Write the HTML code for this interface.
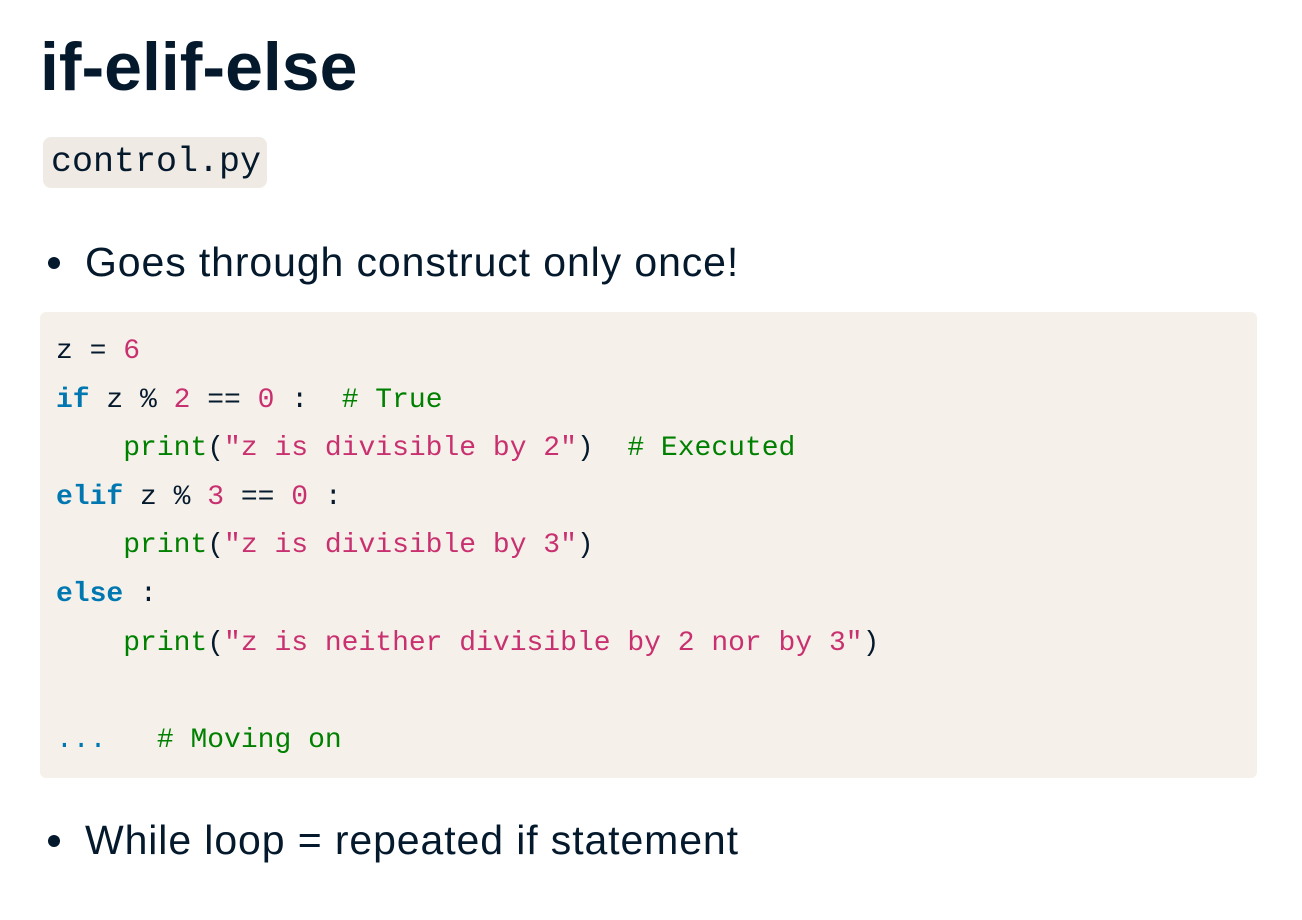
<!DOCTYPE html>
<html><head><meta charset="utf-8"><style>
body{margin:0;background:#fff;width:1302px;height:920px;overflow:hidden;font-family:"Liberation Sans",sans-serif;color:#05192d;position:relative}
h1{position:absolute;left:40px;top:22px;margin:0;font-size:68px;font-weight:bold;letter-spacing:0px;line-height:90px}
.file{position:absolute;left:43px;top:137px;width:224px;height:51px;background:#efebe4;border-radius:8px;font-family:"Liberation Mono",monospace;font-size:35px;line-height:51px;box-sizing:border-box;padding-left:8px}
.bul{position:absolute;left:85px;font-size:41px;letter-spacing:0.9px;line-height:50px}
.bul:before{content:"";position:absolute;left:-37px;top:20px;width:12px;height:12px;border-radius:50%;background:#05192d}
pre{position:absolute;left:40px;top:312px;width:1217px;height:466px;margin:0;background:#f5f1ea;border-radius:6px;box-sizing:border-box;padding:16px 16px;font-family:"Liberation Mono",monospace;font-size:28px;line-height:48.6px;color:#05192d}
.k{color:#0077b0;font-weight:bold}.n{color:#c9306f}.s{color:#c9306f}.f{color:#008000}.c{color:#008000}.d{color:#0077b0}
</style></head><body>
<h1>if-elif-else</h1>
<div class="file">control.py</div>
<div class="bul" style="top:237px">Goes through construct only once!</div>
<pre>z = <span class="n">6</span>
<span class="k">if</span> z % <span class="n">2</span> == <span class="n">0</span> :  <span class="c"># True</span>
    <span class="f">print</span>(<span class="s">"z is divisible by 2"</span>)  <span class="c"># Executed</span>
<span class="k">elif</span> z % <span class="n">3</span> == <span class="n">0</span> :
    <span class="f">print</span>(<span class="s">"z is divisible by 3"</span>)
<span class="k">else</span> :
    <span class="f">print</span>(<span class="s">"z is neither divisible by 2 nor by 3"</span>)

<span class="d">...</span>   <span class="c"># Moving on</span></pre>
<div class="bul" style="top:815px">While loop = repeated if statement</div>
</body></html>
